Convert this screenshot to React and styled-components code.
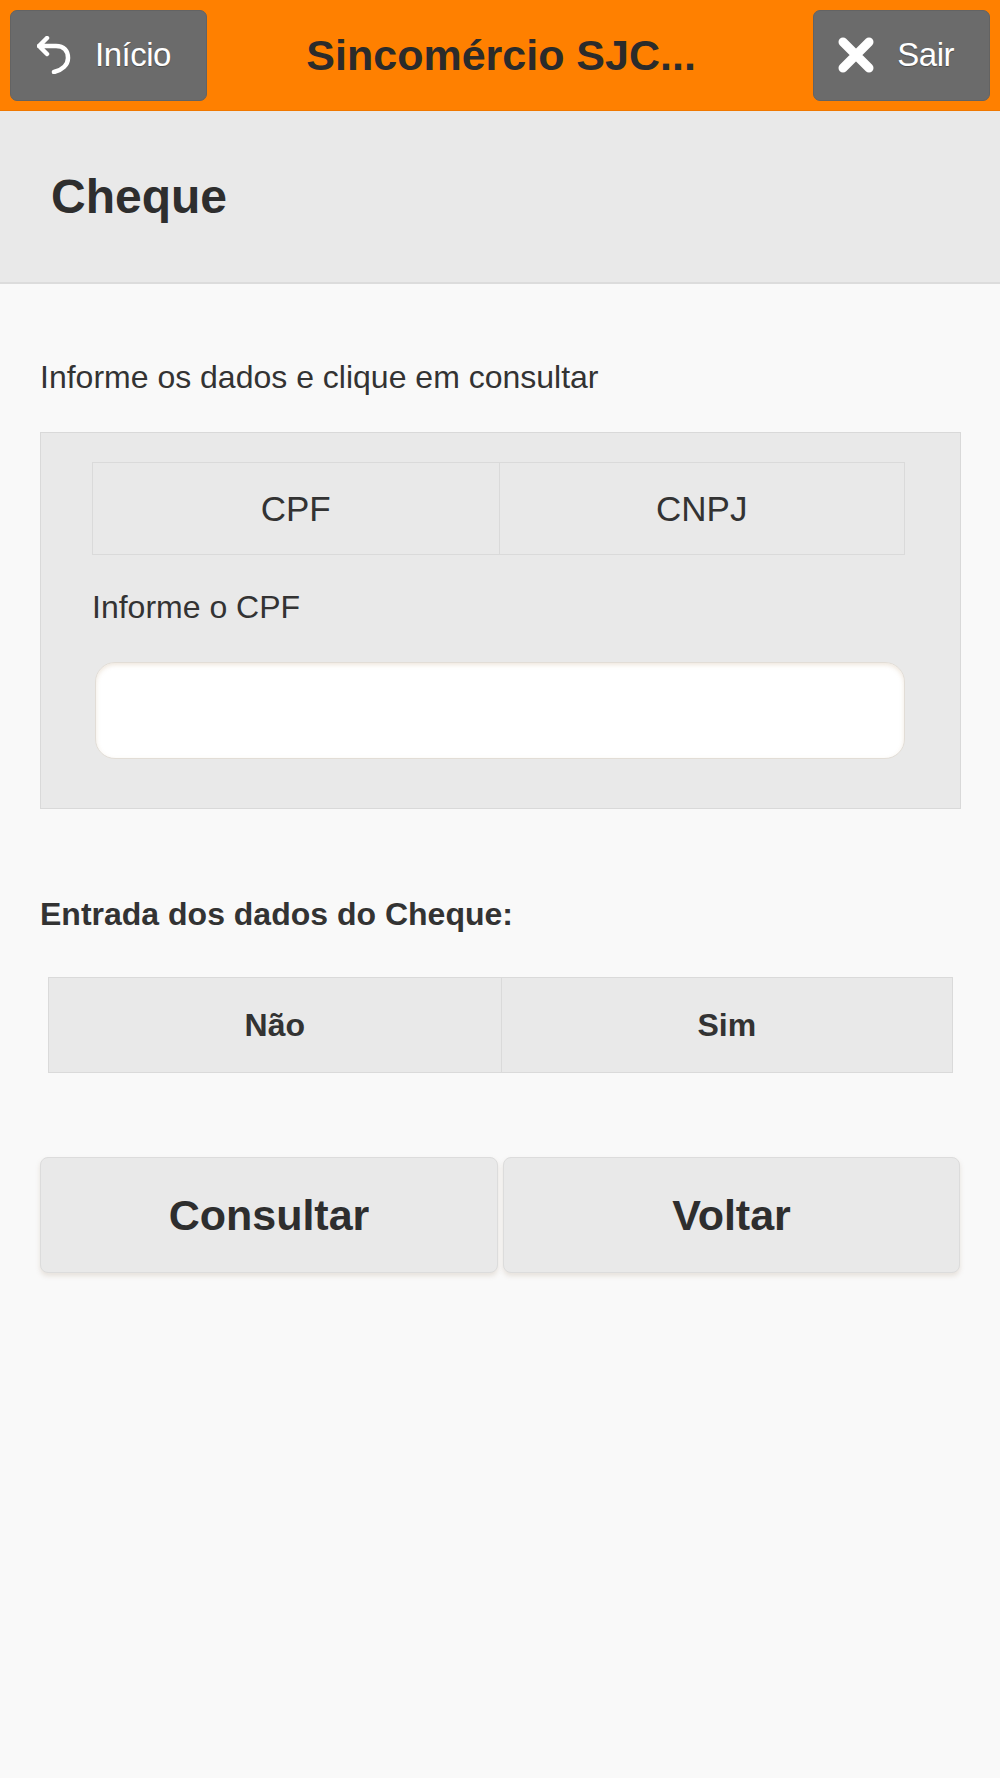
import React from "react";
import styled, { createGlobalStyle } from "styled-components";

const Global = createGlobalStyle`
  html, body { margin: 0; padding: 0; background: #f9f9f9; }
  body { font-family: "Liberation Sans", Arial, sans-serif; color: #333; }
  * { box-sizing: border-box; }
`;

const Page = styled.div`
  min-height: 1778px;
  background: #f9f9f9;
  display: flex;
  flex-direction: column;
`;

const Header = styled.header`
  height: 111px;
  background: #ff8000;
  display: flex;
  align-items: center;
  justify-content: space-between;
  padding: 0 10px;
  border-bottom: 1px solid #f07800;
`;

const HeaderButton = styled.button`
  height: 91px;
  display: flex;
  align-items: center;
  gap: ${(p) => p.$gap}px;
  padding: 0 35px 0 ${(p) => p.$pl}px;
  background: #6b6b6b;
  border: 1px solid #636363;
  border-radius: 7px;
  color: #fff;
  font-family: "Liberation Sans", Arial, sans-serif;
  font-size: 33px;
  letter-spacing: -0.5px;
  text-shadow: 0 1px 1px rgba(0, 0, 0, 0.3);
  cursor: pointer;
`;

const HeaderTitle = styled.h1`
  flex: 1;
  margin: 0;
  padding-right: 18px;
  text-align: center;
  font-size: 43px;
  font-weight: bold;
  color: #2b2b2b;
  white-space: nowrap;
`;

const TitleBand = styled.div`
  height: 173px;
  background: #e9e9e9;
  border-bottom: 2px solid #dcdcdc;
  display: flex;
  align-items: center;
  padding-left: 51px;
`;

const PageTitle = styled.h2`
  margin: 0;
  font-size: 48px;
  font-weight: bold;
  color: #2e2e2e;
`;

const Content = styled.main`
  padding: 74px 39px 0 40px;
  display: flex;
  flex-direction: column;
`;

const Text = styled.p`
  margin: 0;
  font-size: 32px;
  line-height: 38px;
  font-weight: ${(p) => (p.$bold ? "bold" : "normal")};
  color: #333;
`;

const FormBox = styled.section`
  margin-top: 36px;
  background: #e9e9e9;
  border: 1px solid #d9d9d9;
  padding: 29px 55px 49px 51px;
  display: flex;
  flex-direction: column;
`;

const Segmented = styled.div`
  display: grid;
  grid-template-columns: 1fr 1fr;
  height: ${(p) => p.$h}px;
  margin: ${(p) => p.$margin || "0"};
  border: 1px solid #dadada;
  background: #e9e9e9;
`;

const SegmentItem = styled.div`
  display: flex;
  align-items: center;
  justify-content: center;
  font-size: ${(p) => p.$size}px;
  font-weight: ${(p) => (p.$bold ? "bold" : "normal")};
  color: #333;
  & + & {
    border-left: 1px solid #dadada;
  }
`;

const FieldLabel = styled(Text)`
  margin-top: 33px;
`;

const Input = styled.input`
  margin-top: 36px;
  margin-left: 3px;
  height: 97px;
  background: #fff;
  border: 1px solid #e2ddd6;
  border-radius: 20px;
  box-shadow: inset 0 2px 4px rgba(190, 160, 120, 0.25);
  font-size: 32px;
  padding: 0 20px;
  outline: none;
`;

const SectionLabel = styled(Text)`
  margin-top: 86px;
`;

const ActionRow = styled.div`
  margin-top: 84px;
  display: grid;
  grid-template-columns: 458px 457px;
  gap: 5px;
`;

const ActionButton = styled.button`
  height: 116px;
  background: #e9e9e9;
  border: 1px solid #dcdcdc;
  border-radius: 8px;
  box-shadow: 0 3px 5px rgba(150, 120, 90, 0.18);
  font-family: "Liberation Sans", Arial, sans-serif;
  font-size: 43px;
  font-weight: bold;
  color: #2e2e2e;
  cursor: pointer;
`;

const UndoIcon = () => (
  <svg width="34" height="38" viewBox="0 0 34 38" fill="none">
    <path
      d="M10 2 L2 10 L10 18 M2 10 H19 C27 10 31 15 31 22 C31 29 25 34 17 36"
      stroke="#fff"
      strokeWidth="4.5"
      strokeLinecap="round"
      strokeLinejoin="round"
    />
  </svg>
);

const CloseIcon = () => (
  <svg width="38" height="38" viewBox="0 0 38 38">
    <path
      d="M6 6 L32 32 M32 6 L6 32"
      stroke="#fff"
      strokeWidth="9"
      strokeLinecap="round"
    />
  </svg>
);

export default function App() {
  return (
    <Page>
      <Global />
      <Header>
        <HeaderButton $pl={26} $gap={24}>
          <UndoIcon />
          Início
        </HeaderButton>
        <HeaderTitle>Sincomércio SJC...</HeaderTitle>
        <HeaderButton $pl={23} $gap={22}>
          <CloseIcon />
          Sair
        </HeaderButton>
      </Header>
      <TitleBand>
        <PageTitle>Cheque</PageTitle>
      </TitleBand>
      <Content>
        <Text>Informe os dados e clique em consultar</Text>
        <FormBox>
          <Segmented $h={93}>
            <SegmentItem $size={35}>CPF</SegmentItem>
            <SegmentItem $size={35}>CNPJ</SegmentItem>
          </Segmented>
          <FieldLabel>Informe o CPF</FieldLabel>
          <Input type="text" />
        </FormBox>
        <SectionLabel $bold>Entrada dos dados do Cheque:</SectionLabel>
        <Segmented $h={96} $margin="44px 8px 0 8px">
          <SegmentItem $size={32} $bold>Não</SegmentItem>
          <SegmentItem $size={32} $bold>Sim</SegmentItem>
        </Segmented>
        <ActionRow>
          <ActionButton>Consultar</ActionButton>
          <ActionButton>Voltar</ActionButton>
        </ActionRow>
      </Content>
    </Page>
  );
}
